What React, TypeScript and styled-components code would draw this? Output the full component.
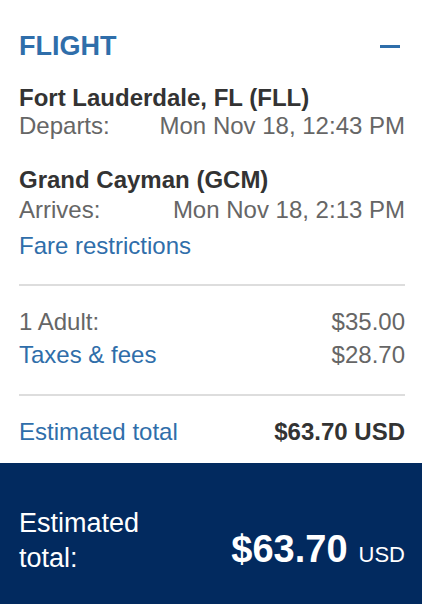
import React from "react";
import styled, { createGlobalStyle } from "styled-components";

const Global = createGlobalStyle`
  html, body { margin: 0; padding: 0; background: #ffffff; }
  body { font-family: "Liberation Sans", Arial, Helvetica, sans-serif; }
  * { box-sizing: border-box; }
`;

const BLUE = "#2f6eaa";
const GRAY = "#666666";
const DARK = "#333333";

const Card = styled.div`
  width: 422px;
  height: 604px;
  display: flex;
  flex-direction: column;
  background: #fff;
`;

const Body = styled.div`
  flex: 1;
  padding: 30px 17px 0 19px;
  display: flex;
  flex-direction: column;
`;

const Header = styled.div`
  display: flex;
  justify-content: space-between;
  align-items: center;
  margin-bottom: 22px;
`;

const Title = styled.h2`
  margin: 0;
  font-size: 27px;
  line-height: 32px;
  font-weight: 700;
  color: ${BLUE};
`;

const Collapse = styled.button`
  border: 0;
  padding: 0;
  width: 20px;
  height: 3px;
  margin-right: 5px;
  background: ${BLUE};
  cursor: pointer;
`;

const Stop = styled.div<{ $gap?: number }>`
  display: flex;
  flex-direction: column;
  margin-bottom: ${(p) => p.$gap ?? 0}px;
`;

const Place = styled.div`
  font-size: 24px;
  line-height: 28px;
  font-weight: 700;
  color: ${DARK};
`;

const Row = styled.div<{ $gap?: number; $top?: number }>`
  display: flex;
  justify-content: space-between;
  font-size: 24px;
  line-height: 28px;
  color: ${GRAY};
  margin-top: ${(p) => p.$top ?? 0}px;
  margin-bottom: ${(p) => p.$gap ?? 0}px;
`;

const Link = styled.a`
  font-size: 24px;
  line-height: 28px;
  color: ${BLUE};
  text-decoration: none;
  cursor: pointer;
`;

const Divider = styled.hr<{ $top: number; $bottom: number }>`
  border: 0;
  height: 2px;
  background: #dddddd;
  margin: ${(p) => p.$top}px 0 ${(p) => p.$bottom}px;
`;

const Strong = styled.span`
  font-weight: 700;
  color: ${DARK};
`;

const Footer = styled.div`
  background: #022a5f;
  height: 141px;
  padding: 43px 17px 28px 19px;
  display: flex;
  justify-content: space-between;
  align-items: flex-end;
  color: #ffffff;
`;

const FooterLabel = styled.div`
  font-size: 27px;
  line-height: 35px;
`;

const FooterPrice = styled.div`
  font-size: 38px;
  line-height: 42px;
  font-weight: 700;
`;

const Currency = styled.span`
  font-size: 22px;
  font-weight: 400;
  margin-left: 11px;
`;

export default function App() {
  return (
    <>
      <Global />
      <Card>
        <Body>
          <Header>
            <Title>FLIGHT</Title>
            <Collapse aria-label="Collapse" />
          </Header>
          <Stop $gap={26}>
            <Place>Fort Lauderdale, FL (FLL)</Place>
            <Row>
              <span>Departs:</span>
              <span>Mon Nov 18, 12:43 PM</span>
            </Row>
          </Stop>
          <Stop $gap={8}>
            <Place>Grand Cayman (GCM)</Place>
            <Row $top={2}>
              <span>Arrives:</span>
              <span>Mon Nov 18, 2:13 PM</span>
            </Row>
          </Stop>
          <Link>Fare restrictions</Link>
          <Divider $top={24} $bottom={22} />
          <Row $gap={5}>
            <span>1 Adult:</span>
            <span>$35.00</span>
          </Row>
          <Row>
            <Link>Taxes &amp; fees</Link>
            <span>$28.70</span>
          </Row>
          <Divider $top={25} $bottom={22} />
          <Row>
            <Link>Estimated total</Link>
            <Strong>$63.70 USD</Strong>
          </Row>
        </Body>
        <Footer>
          <FooterLabel>
            Estimated
            <br />
            total:
          </FooterLabel>
          <FooterPrice>
            $63.70<Currency>USD</Currency>
          </FooterPrice>
        </Footer>
      </Card>
    </>
  );
}
